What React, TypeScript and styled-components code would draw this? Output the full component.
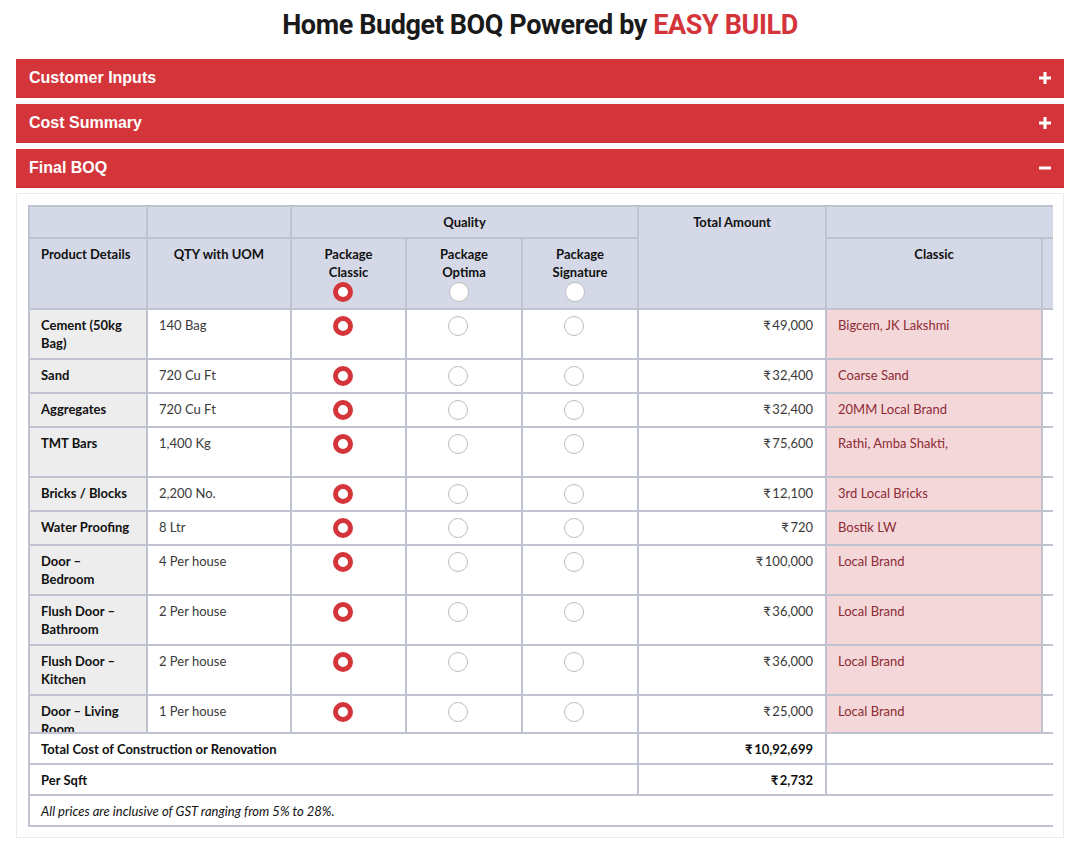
import React from "react";
import styled, { createGlobalStyle } from "styled-components";

const GlobalStyle = createGlobalStyle`
  * { box-sizing: border-box; }
  body {
    margin: 0;
    background: #ffffff;
    font-family: "Lato", "Liberation Sans", sans-serif;
    color: #1a1a1a;
  }
`;

const RED = "#d3353b";
const LINE = "#bfc3d0";
const HEAD_BG = "#d5d9e7";

const Page = styled.div`
  padding: 0 16px 14px;
`;

const Title = styled.h1`
  margin: 0;
  padding: 7px 0 16px;
  text-align: center;
  font-family: "Roboto", "Liberation Sans", sans-serif;
  font-weight: 700;
  font-size: 27px;
  line-height: 36px;
  letter-spacing: -0.4px;
  color: #1a1a1a;
`;

const Brand = styled.span`
  color: ${RED};
`;

const Bar = styled.div`
  display: flex;
  align-items: center;
  justify-content: space-between;
  height: 39px;
  padding: 0 12px 0 13px;
  margin-bottom: 6px;
  background: ${RED};
  border-bottom: 1px solid #c92f35;
  color: #ffffff;
  font-family: "Liberation Sans", Arial, sans-serif;
  font-weight: 700;
  font-size: 16px;
`;

const Panel = styled.div`
  border: 1px solid #ececec;
  padding: 11px 10px 10px 11px;
  margin-top: -1px;
`;

const Viewport = styled.div`
  width: 1025px;
  overflow: hidden;
`;

const ScrollArea = styled.div`
  max-height: 527px;
  overflow: auto;
  scrollbar-width: none;
  &::-webkit-scrollbar {
    display: none;
  }
`;

const Table = styled.table`
  border-collapse: collapse;
  table-layout: fixed;
  width: 1233px;
  font-size: 13px;
  line-height: 18px;
`;

const Col = styled.col<{ $w: number }>`
  width: ${(p) => p.$w}px;
`;

const Th = styled.th<{ $align?: string }>`
  background: ${HEAD_BG};
  border: 2px solid ${LINE};
  padding: 6px 11px;
  font-weight: 700;
  color: #111111;
  text-align: ${(p) => p.$align || "center"};
  vertical-align: top;
`;

const HeadLine = styled.span`
  display: block;
`;

const RadioWrap = styled.div`
  margin-top: 1px;
  height: 20px;
`;

const Td = styled.td<{ $kind?: "name" | "qty" | "radio" | "amount" | "brand" | "blank" }>`
  border: 2px solid ${LINE};
  padding: 6px 12px 6px 11px;
  vertical-align: top;
  color: ${(p) => (p.$kind === "brand" ? "#8e2b33" : p.$kind === "name" ? "#111111" : "#3a3a3a")};
  font-weight: ${(p) => (p.$kind === "name" ? 700 : 400)};
  background: ${(p) =>
    p.$kind === "name" ? "#ededed" : p.$kind === "brand" ? "#f3d7d9" : "#ffffff"};
  text-align: ${(p) => (p.$kind === "amount" ? "right" : p.$kind === "radio" ? "center" : "left")};
`;

const Tr = styled.tr<{ $tall?: boolean }>`
  height: ${(p) => (p.$tall ? "50px" : "auto")};
`;

const Radio = styled.span<{ $on?: boolean }>`
  display: inline-block;
  vertical-align: top;
  width: 20px;
  height: 20px;
  margin-right: 11px;
  border-radius: 50%;
  background: #ffffff;
  border: ${(p) => (p.$on ? `5px solid ${RED}` : "1px solid #bdbdbd")};
`;

const FootTd = styled.td<{ $bold?: boolean; $italic?: boolean; $right?: boolean }>`
  border: 2px solid ${LINE};
  padding: 6px 12px 5px 11px;
  font-size: 13px;
  line-height: 18px;
  color: #111111;
  font-weight: ${(p) => (p.$bold ? 700 : 400)};
  font-style: ${(p) => (p.$italic ? "italic" : "normal")};
  text-align: ${(p) => (p.$right ? "right" : "left")};
`;

const Icon = styled.svg`
  display: block;
  width: 14px;
  height: 14px;
`;

const Plus = () => (
  <Icon viewBox="0 0 14 14">
    <path d="M7 1v12M1 7h12" stroke="#fff" strokeWidth="3" />
  </Icon>
);

const Minus = () => (
  <Icon viewBox="0 0 14 14">
    <path d="M1 7h12" stroke="#fff" strokeWidth="3" />
  </Icon>
);

const COLS = [118, 144, 115, 116, 116, 188, 216, 220];
const R = "₹\u2009";

type Row = { name: string; qty: string; amt: string; brand: string; tall?: boolean };

const ROWS: Row[] = [
  { name: "Cement (50kg Bag)", qty: "140 Bag", amt: "49,000", brand: "Bigcem, JK Lakshmi", tall: true },
  { name: "Sand", qty: "720 Cu Ft", amt: "32,400", brand: "Coarse Sand" },
  { name: "Aggregates", qty: "720 Cu Ft", amt: "32,400", brand: "20MM Local Brand" },
  { name: "TMT Bars", qty: "1,400 Kg", amt: "75,600", brand: "Rathi, Amba Shakti,", tall: true },
  { name: "Bricks / Blocks", qty: "2,200 No.", amt: "12,100", brand: "3rd Local Bricks" },
  { name: "Water Proofing", qty: "8 Ltr", amt: "720", brand: "Bostik LW" },
  { name: "Door – Bedroom", qty: "4 Per house", amt: "100,000", brand: "Local Brand", tall: true },
  { name: "Flush Door – Bathroom", qty: "2 Per house", amt: "36,000", brand: "Local Brand", tall: true },
  { name: "Flush Door – Kitchen", qty: "2 Per house", amt: "36,000", brand: "Local Brand", tall: true },
  { name: "Door – Living Room", qty: "1 Per house", amt: "25,000", brand: "Local Brand", tall: true },
];

const PACKAGES = [
  { name: "Classic", on: true },
  { name: "Optima", on: false },
  { name: "Signature", on: false },
];

const Cols = () => (
  <colgroup>
    {COLS.map((w, i) => (
      <Col key={i} $w={w} />
    ))}
  </colgroup>
);

export default function App() {
  return (
    <>
      <GlobalStyle />
      <Page>
        <Title>
          Home Budget BOQ Powered by <Brand>EASY BUILD</Brand>
        </Title>
        <Bar>
          Customer Inputs
          <Plus />
        </Bar>
        <Bar>
          Cost Summary
          <Plus />
        </Bar>
        <Bar>
          Final BOQ
          <Minus />
        </Bar>
        <Panel>
          <Viewport>
            <ScrollArea>
              <Table>
                <Cols />
                <thead>
                  <tr>
                    <Th />
                    <Th />
                    <Th colSpan={3}>Quality</Th>
                    <Th rowSpan={2}>Total Amount</Th>
                    <Th colSpan={2} />
                  </tr>
                  <tr>
                    <Th $align="left">Product Details</Th>
                    <Th>QTY with UOM</Th>
                    {PACKAGES.map((p) => (
                      <Th key={p.name}>
                        <HeadLine>Package</HeadLine>
                        <HeadLine>{p.name}</HeadLine>
                        <RadioWrap>
                          <Radio $on={p.on} />
                        </RadioWrap>
                      </Th>
                    ))}
                    <Th>Classic</Th>
                    <Th />
                  </tr>
                </thead>
                <tbody>
                  {ROWS.map((r) => (
                    <Tr key={r.name} $tall={r.tall}>
                      <Td $kind="name">{r.name}</Td>
                      <Td $kind="qty">{r.qty}</Td>
                      {PACKAGES.map((p) => (
                        <Td key={p.name} $kind="radio">
                          <Radio $on={p.on} />
                        </Td>
                      ))}
                      <Td $kind="amount">
                        {R}
                        {r.amt}
                      </Td>
                      <Td $kind="brand">{r.brand}</Td>
                      <Td $kind="blank" />
                    </Tr>
                  ))}
                </tbody>
              </Table>
            </ScrollArea>
            <Table>
              <Cols />
              <tbody>
                <tr>
                  <FootTd colSpan={5} $bold>
                    Total Cost of Construction or Renovation
                  </FootTd>
                  <FootTd $bold $right>
                    {R}10,92,699
                  </FootTd>
                  <FootTd colSpan={2} />
                </tr>
                <tr>
                  <FootTd colSpan={5} $bold>
                    Per Sqft
                  </FootTd>
                  <FootTd $bold $right>
                    {R}2,732
                  </FootTd>
                  <FootTd colSpan={2} />
                </tr>
                <tr>
                  <FootTd colSpan={8} $italic>
                    All prices are inclusive of GST ranging from 5% to 28%.
                  </FootTd>
                </tr>
              </tbody>
            </Table>
          </Viewport>
        </Panel>
      </Page>
    </>
  );
}
